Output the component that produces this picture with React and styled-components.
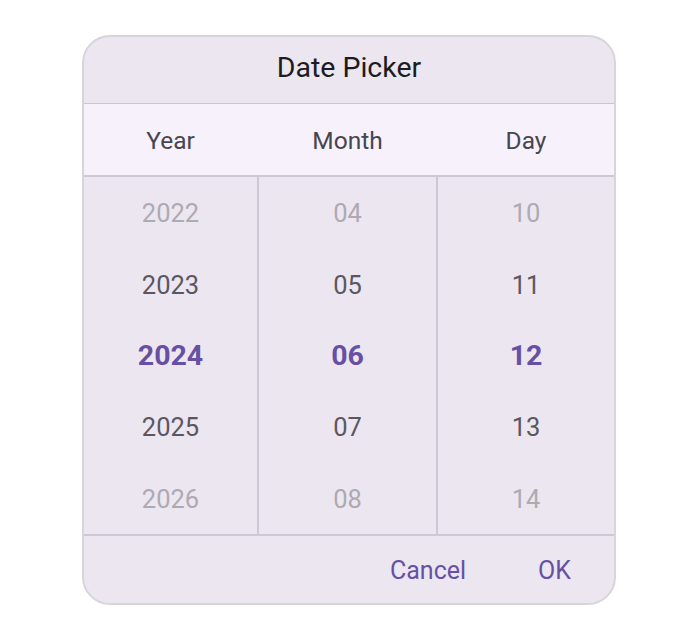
import React from "react";
import styled, { createGlobalStyle } from "styled-components";

const Global = createGlobalStyle`
  html, body { margin: 0; padding: 0; background: #ffffff; }
  body { font-family: Roboto, "Noto Sans", sans-serif; }
`;

const Page = styled.div`
  display: flex;
  justify-content: center;
  padding-top: 35px;
  padding-right: 2px;
`;

const Card = styled.div`
  width: 534px;
  box-sizing: border-box;
  border: 2px solid #d7d4da;
  border-radius: 28px;
  background: #ece6f0;
  overflow: hidden;
  display: flex;
  flex-direction: column;
`;

const Title = styled.div`
  height: 67px;
  box-sizing: border-box;
  padding-bottom: 5px;
  display: flex;
  align-items: center;
  justify-content: center;
  font-size: 28.5px;
  color: #1d1b20;
  border-bottom: 1px solid #cac4d0;
`;

const grid = `
  display: grid;
  grid-template-columns: 173px 179px 1fr;
`;

const HeaderRow = styled.div`
  ${grid}
  height: 71px;
  background: #f6f1fb;
  border-bottom: 2px solid #cdc8d3;
`;

const HeaderCell = styled.div`
  display: flex;
  align-items: center;
  justify-content: center;
  padding-top: 2px;
  font-size: 24.5px;
  color: #49454f;
  padding-left: ${(p) => (p.$first ? "0" : "2px")};
`;

const Columns = styled.div`
  ${grid}
  border-bottom: 2px solid #cdc8d3;
`;

const Column = styled.div`
  display: flex;
  flex-direction: column;
  border-left: ${(p) => (p.$first ? "none" : "2px solid #cdc8d3")};
`;

const Item = styled.div`
  height: 71.4px;
  display: flex;
  align-items: center;
  justify-content: center;
  padding-top: 1px;
  box-sizing: border-box;
  font-size: ${(p) => (p.$level === 0 ? "28.5px" : "25.5px")};
  font-weight: ${(p) => (p.$level === 0 ? 700 : 400)};
  color: ${(p) =>
    p.$level === 0 ? "#6750a4" : p.$level === 1 ? "#5b5760" : "#aeaab2"};
`;

const Footer = styled.div`
  height: 67px;
  box-sizing: border-box;
  padding-top: 2px;
  display: flex;
  align-items: center;
  justify-content: flex-end;
  padding-right: 43px;
  gap: 72px;
`;

const TextButton = styled.button`
  border: none;
  background: none;
  padding: 0;
  font-family: Roboto, "Noto Sans", sans-serif;
  font-size: 25px;
  color: #6750a4;
  cursor: pointer;
`;

const columns = [
  ["2022", "2023", "2024", "2025", "2026"],
  ["04", "05", "06", "07", "08"],
  ["10", "11", "12", "13", "14"],
];
const levels = [2, 1, 0, 1, 2];
const headers = ["Year", "Month", "Day"];

export default function App() {
  return (
    <>
      <Global />
      <Page>
        <Card>
          <Title>Date Picker</Title>
          <HeaderRow>
            {headers.map((h, i) => (
              <HeaderCell key={h} $first={i === 0}>
                {h}
              </HeaderCell>
            ))}
          </HeaderRow>
          <Columns>
            {columns.map((col, ci) => (
              <Column key={ci} $first={ci === 0}>
                {col.map((v, i) => (
                  <Item key={v} $level={levels[i]}>
                    {v}
                  </Item>
                ))}
              </Column>
            ))}
          </Columns>
          <Footer>
            <TextButton>Cancel</TextButton>
            <TextButton>OK</TextButton>
          </Footer>
        </Card>
      </Page>
    </>
  );
}
